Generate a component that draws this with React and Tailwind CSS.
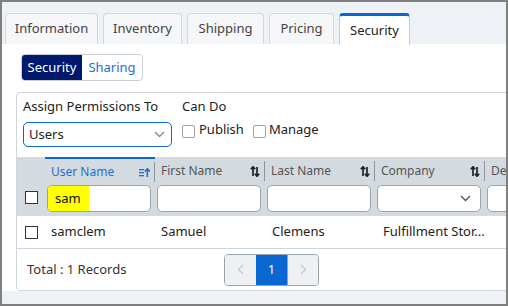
import React from 'react';

const FONT = { fontFamily: '"Noto Sans", "Open Sans", sans-serif' };

const tabs = [
  { label: 'Information', w: 'w-[93px]' },
  { label: 'Inventory', w: 'w-[79px]' },
  { label: 'Shipping', w: 'w-[77px]' },
  { label: 'Pricing', w: 'w-[65px]' },
];

const SortAsc = () => (
  <svg width="11" height="9" viewBox="0 0 11 9" className="text-[#1f6fd1]">
    <rect x="0" y="1" width="5" height="1.3" fill="currentColor" />
    <rect x="0" y="4" width="5" height="1.3" fill="currentColor" />
    <rect x="0" y="7" width="5" height="1.3" fill="currentColor" />
    <path d="M8.3 1 L8.3 9" stroke="currentColor" strokeWidth="1.6" />
    <path d="M5.8 3.6 L8.3 0.8 L10.8 3.6" stroke="currentColor" strokeWidth="1.6" fill="none" />
  </svg>
);

const SortBoth = () => (
  <svg width="10" height="11" viewBox="0 0 10 11" className="text-[#222]">
    <path d="M3 10 L3 1 M0.8 3.2 L3 0.8 L5.2 3.2" stroke="currentColor" strokeWidth="1.7" fill="none" />
    <path d="M7 1 L7 10 M4.8 7.8 L7 10.2 L9.2 7.8" stroke="currentColor" strokeWidth="1.7" fill="none" />
  </svg>
);

const Chevron = ({ className }) => (
  <svg width="11" height="7" viewBox="0 0 11 7" className={className}>
    <path d="M1 1 L5.5 5.5 L10 1" stroke="currentColor" strokeWidth="1.4" fill="none" />
  </svg>
);

const PageArrow = ({ left }) => (
  <svg width="7" height="11" viewBox="0 0 7 11" className="text-[#c6cbd0]">
    <path d={left ? 'M6 1 L1.5 5.5 L6 10' : 'M1 1 L5.5 5.5 L1 10'} stroke="currentColor" strokeWidth="1.4" fill="none" />
  </svg>
);

const Check = ({ light }) => (
  <span className={`block w-[13px] h-[13px] bg-white border ${light ? 'border-[#9aa3ab] rounded-[2px]' : 'border-[#333]'}`} />
);

const columns = [
  { label: 'User Name', active: true },
  { label: 'First Name' },
  { label: 'Last Name' },
  { label: 'Company' },
  { label: 'Department' },
];

export default function App() {
  return (
    <div style={FONT} className="w-[508px] h-[306px] border-2 border-[#7f7f7f] bg-[#eef1f5] flex flex-col overflow-hidden text-[13px] text-[#333]">
      <div className="flex items-end gap-[5px] pl-[3px] pt-[10px] h-[42px] shrink-0">
        {tabs.map((t) => (
          <div key={t.label} className={`${t.w} h-[31px] flex items-center justify-center bg-[#f5f6f8] border border-b-0 border-[#d3d8dd] rounded-t-[4px] text-[#444]`}>
            {t.label}
          </div>
        ))}
        <div className="w-[71px] h-[32px] -mb-px flex items-center justify-center bg-white border border-b-0 border-[#c6ccd2] border-t-[3px] border-t-[#0a66d0] rounded-t-[4px] text-[#222] relative z-10">
          Security
        </div>
      </div>
      <div className="bg-white h-[247px] shrink-0 flex flex-col overflow-hidden">
        <div className="flex ml-[19px] mt-[10px] h-[27px] w-[122px] border border-[#c9d0d6] rounded-[4px] overflow-hidden">
          <div className="w-[60px] bg-[#00186e] text-white flex items-center justify-center">Security</div>
          <div className="flex-1 text-[#1f6fd1] flex items-center justify-center">Sharing</div>
        </div>
        <div className="ml-[14px] mt-[11px] w-[600px] flex-1 border border-[#cfd5da] rounded-[4px] flex flex-col">
          <div className="flex pl-[6px] pt-[4px] h-[64px]">
            <div className="w-[159px] flex flex-col">
              <div className="h-[20px] flex items-center text-[#222]">Assign Permissions To</div>
              <div className="mt-[5px] h-[25px] w-[149px] border border-[#0a66d0] rounded-[5px] flex items-center justify-between pl-[5px] pr-[6px] text-[#222]">
                <span>Users</span>
                <Chevron className="text-[#8a8f94]" />
              </div>
            </div>
            <div className="flex flex-col">
              <div className="h-[20px] flex items-center text-[#222]">Can Do</div>
              <div className="mt-[3px] h-[22px] flex items-center text-[#222]">
                <Check light />
                <span className="ml-[4px] mr-[9px] -mt-[3px]">Publish</span>
                <Check light />
                <span className="ml-[3px] -mt-[3px]">Manage</span>
              </div>
            </div>
          </div>
          <div className="bg-[#d3dbe0]">
            <div className="flex h-[28px]">
              <div className="w-[28px] shrink-0" />
              {columns.map((c) => (
                <div key={c.label} className={`w-[110px] shrink-0 flex items-center ${c.active ? 'border-t-2 border-[#0a66d0]' : ''}`}>
                  <div className={`flex-1 flex items-center justify-between pl-[6px] pr-[4px] h-[20px] border-r border-[#8d959c] ${c.active ? 'text-[#1f6fd1]' : 'text-[#555]'} text-[12px]`}>
                    <span>{c.label}</span>
                    {c.active ? <SortAsc /> : <SortBoth />}
                  </div>
                </div>
              ))}
            </div>
            <div className="flex h-[31px] items-start">
              <div className="w-[28px] shrink-0 flex justify-center pt-[6px]"><Check /></div>
              {columns.map((c, i) => (
                <div key={c.label} className="w-[110px] shrink-0 pl-[2px] pr-[4px]">
                  <div className="h-[27px] bg-white border border-[#9aa3ab] rounded-[5px] flex items-center justify-between overflow-hidden">
                    {i === 0 && <span className="h-full bg-[#ffff00] flex items-center pl-[7px] pr-[8px] text-[#111]">sam</span>}
                    {i === 3 && <span />}
                    {i === 3 && <Chevron className="text-[#555] mr-[9px]" />}
                  </div>
                </div>
              ))}
            </div>
          </div>
          <div className="flex h-[33px] items-center border-b border-[#cfd5da] text-[#222]">
            <div className="w-[28px] shrink-0 flex justify-center"><Check /></div>
            <div className="w-[110px] shrink-0 pl-[6px]">samclem</div>
            <div className="w-[110px] shrink-0 pl-[6px]">Samuel</div>
            <div className="w-[110px] shrink-0 pl-[7px]">Clemens</div>
            <div className="w-[110px] shrink-0 pl-[8px]">Fulfillment Stor...</div>
          </div>
          <div className="flex-1 flex items-center">
            <div className="w-[207px] pl-[10px] text-[#333]">Total : 1 Records</div>
            <div className="flex h-[32px] border border-[#97a3ae] rounded-[4px] overflow-hidden">
              <div className="w-[31px] bg-[#eef0f3] flex items-center justify-center"><PageArrow left /></div>
              <div className="w-[31px] bg-[#0a66d0] text-white flex items-center justify-center">1</div>
              <div className="w-[31px] bg-[#eef0f3] flex items-center justify-center border-l border-[#97a3ae]"><PageArrow /></div>
            </div>
          </div>
        </div>
      </div>
    </div>
  );
}
